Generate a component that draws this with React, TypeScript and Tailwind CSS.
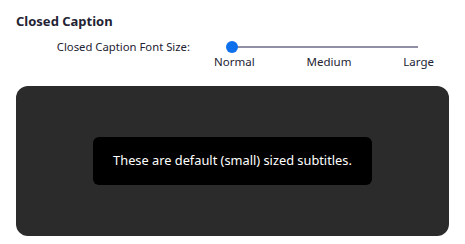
export default function App() {
  return (
    <div
      className="w-[465px] h-[244px] bg-white px-4 pt-[11px] text-[#232333]"
      style={{ fontFamily: '"Noto Sans", "Open Sans", sans-serif' }}
    >
      <h2 className="text-[13px] font-bold leading-[20px]">Closed Caption</h2>

      <div className="mt-[7px] flex items-start">
        <div className="w-[175px] text-right text-[11.3px] leading-[18px] pr-[1px]">
          Closed Caption Font Size:
        </div>
        <div className="ml-[23px] w-[220px]">
          <div className="relative h-[18px] flex items-center pl-[18px] pr-[16px]">
            <div className="h-[2px] w-full bg-[#8f8fa6]" />
            <div className="absolute left-[12px] top-[3px] h-[12px] w-[12px] rounded-full bg-[#0e71eb]" />
          </div>
          <div className="-mt-[1px] flex justify-between text-[11.5px] leading-[14px]">
            <span>Normal</span>
            <span>Medium</span>
            <span>Large</span>
          </div>
        </div>
      </div>

      <div className="mt-[17px] h-[150px] rounded-[12px] bg-[#2b2b2b] flex items-center justify-center">
        <div className="w-[279px] h-[48px] rounded-[6px] bg-black flex items-center justify-center">
          <span className="text-white text-[12.8px]">These are default (small) sized subtitles.</span>
        </div>
      </div>
    </div>
  )
}
